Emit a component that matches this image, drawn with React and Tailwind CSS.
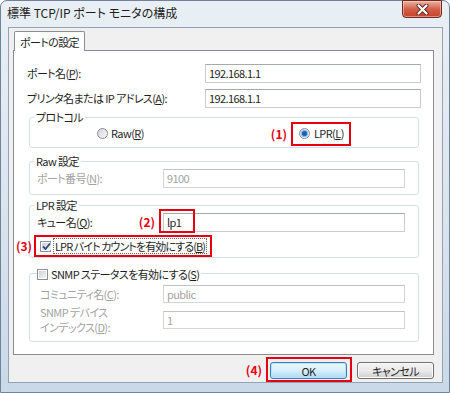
import React from 'react';

const FONT = 'font-["Noto_Sans_CJK_JP","Noto_Sans",sans-serif] [font-feature-settings:"palt"_1]';

function TextBox({ value, disabled = false, className = '' }) {
  return (
    <div
      className={`flex items-center pl-[3px] bg-white border whitespace-nowrap ${
        disabled
          ? 'border-[#d2d6dc] border-t-[#bfc3c9] text-[#a3a3a3]'
          : 'border-[#c9ccd2] border-t-[#a5a9b0] text-[#1e1e1e]'
      } ${className}`}
    >
      {value}
    </div>
  );
}

function Radio({ checked = false }) {
  return (
    <span className="w-[11px] h-[11px] shrink-0 rounded-full border border-[#8c8f94] bg-gradient-to-br from-[#d4d6d9] to-[#f7f7f7] flex items-center justify-center">
      {checked && (
        <span className="w-[5px] h-[5px] rounded-full bg-[#1c5fb0] shadow-[0_0_0_1px_#7eb4ea]" />
      )}
    </span>
  );
}

function Checkbox({ checked = false }) {
  return (
    <span className="w-[11px] h-[11px] shrink-0 border border-[#8c8f94] bg-white p-[1px] flex">
      <span className="flex-1 bg-gradient-to-br from-[#cfd1d4] to-[#f4f4f4] flex items-center justify-center">
        {checked && (
          <svg width="9" height="9" viewBox="0 0 9 9">
            <path d="M1 4.5 L3.5 7 L8 1.5" fill="none" stroke="#2b4686" strokeWidth="1.8" />
          </svg>
        )}
      </span>
    </span>
  );
}

function Group({ label, className = '', children }) {
  return (
    <div className={`relative ml-[2px] w-[390px] border border-[#d5dfe5] rounded-[3px] ${className}`}>
      <div className="absolute -top-[9px] left-[4px] bg-white px-[2px] leading-[16px] text-[#1e1e1e] whitespace-nowrap">
        {label}
      </div>
      {children}
    </div>
  );
}

function Mark({ children, className = '' }) {
  return (
    <span className={`text-[#e60012] font-bold text-[12px] leading-[16px] tracking-normal whitespace-nowrap ${className}`}>
      {children}
    </span>
  );
}

export default function App() {
  return (
    <div className="w-[450px] h-[393px] overflow-hidden bg-white">
      <div
        className={`${FONT} w-[450px] h-[393px] rounded-t-[7px] border border-[#6f849b] bg-gradient-to-b from-[#e9eff5] via-[#dbe5ef] to-[#c9d9e8] text-[11px] tracking-[-0.6px] text-[#1e1e1e] flex flex-col`}
      >
        {/* title bar */}
        <div className="h-[26px] flex items-start shrink-0">
          <div className="pl-[6px] pt-[4px] leading-[16px] text-[12px] tracking-normal text-[#1e1e1e] whitespace-nowrap">
            標準 TCP/IP ポート モニタの構成
          </div>
          <div className="ml-auto mr-[7px] -mt-[1px] w-[40px] h-[18px] rounded-b-[4px] border border-[#6c2c22] bg-gradient-to-b from-[#eab2a3] via-[#d4604a] to-[#c7402c] shadow-[inset_0_0_0_1px_rgba(255,220,210,0.5)] flex items-center justify-center">
            <svg width="13" height="11" viewBox="0 0 13 11">
              <path d="M2.5 1.5 L10.5 9.5 M10.5 1.5 L2.5 9.5" stroke="#5a2a22" strokeWidth="4" strokeLinecap="round" />
              <path d="M2.5 1.5 L10.5 9.5 M10.5 1.5 L2.5 9.5" stroke="#ffffff" strokeWidth="2.2" strokeLinecap="round" />
            </svg>
          </div>
        </div>

        {/* client area */}
        <div className="ml-[7px] w-[435px] h-[356px] shrink-0 border border-[#93a3b5] bg-[#f0f0f0] flex flex-col">
          {/* tab */}
          <div className="ml-[5px] mt-[3px] relative z-10 w-[71px] h-[20px] bg-white border border-b-0 border-[#898c95] rounded-t-[2px] flex items-center justify-center leading-[16px] whitespace-nowrap">
            ポートの設定
          </div>

          {/* tab panel */}
          <div className="ml-[4px] -mt-[1px] w-[421px] h-[305px] bg-white border border-[#898c95] pl-[13px] pt-[13px] flex flex-col">
            <div className="flex items-center h-[19px]">
              <span className="w-[178px] whitespace-nowrap">
                ポート名(<u>P</u>):
              </span>
              <TextBox value="192.168.1.1" className="w-[216px] h-[19px]" />
            </div>
            <div className="flex items-center h-[19px] mt-[6px]">
              <span className="w-[178px] whitespace-nowrap">
                プリンタ名または IP アドレス(<u>A</u>):
              </span>
              <TextBox value="192.168.1.1" className="w-[216px] h-[19px]" />
            </div>

            <Group label="プロトコル" className="mt-[9px] h-[31px]">
              <div className="h-full flex items-center justify-between pl-[67px] pr-[67px] pt-[2px]">
                <div className="flex items-center gap-[3px]">
                  <Radio />
                  <span className="whitespace-nowrap">
                    Raw(<u>R</u>)
                  </span>
                </div>
                <div className="flex items-center gap-[4px]">
                  <Mark>(1)</Mark>
                  <div className="w-[60px] h-[24px] border-2 border-[#e60012] pl-[6px] flex items-center gap-[4px]">
                    <Radio checked />
                    <span className="whitespace-nowrap">
                      LPR(<u>L</u>)
                    </span>
                  </div>
                </div>
              </div>
            </Group>

            <Group label="Raw 設定" className="mt-[13px] h-[34px] pt-[7px] pl-[7px]">
              <div className="flex items-center h-[19px]">
                <span className="w-[126px] text-[#a3a3a3] whitespace-nowrap">
                  ポート番号(<u>N</u>):
                </span>
                <TextBox value="9100" disabled className="w-[242px] h-[19px] border-[#c4c7cc] border-t-[#aeb1b6]" />
              </div>
            </Group>

            <Group label="LPR 設定" className="mt-[10px] h-[53px] pt-[7px]">
              <div className="flex items-center h-[19px] pl-[7px]">
                <span className="w-[126px] flex justify-between pr-[8px] whitespace-nowrap">
                  <span>
                    キュー名(<u>Q</u>):
                  </span>
                  <Mark>(2)</Mark>
                </span>
                <div className="relative">
                  <TextBox value="lp1" className="w-[242px] h-[19px]" />
                  <div className="absolute -left-[4px] -top-[4px] w-[36px] h-[24px] border-2 border-[#e60012]" />
                </div>
              </div>
              <div className="relative ml-[4px] mt-[3px] w-[178px] h-[22px] border-2 border-[#e60012] pl-[4px] flex items-center gap-[2px]">
                <Mark className="absolute -left-[20px] top-[1px]">(3)</Mark>
                <Checkbox checked />
                <span className="border border-dotted border-[#6a6a6a] px-[1px] leading-[14px] tracking-[-0.9px] whitespace-nowrap">
                  LPR バイト カウントを有効にする(<u>B</u>)
                </span>
              </div>
            </Group>

            <div className="relative ml-[2px] mt-[15px] w-[390px] h-[69px] border border-[#d5dfe5] rounded-[3px] pt-[11px] pl-[10px]">
              <div className="absolute -top-[8px] left-[7px] bg-white pr-[2px] flex items-center gap-[3px] leading-[16px] whitespace-nowrap">
                <Checkbox />
                <span>
                  SNMP ステータスを有効にする(<u>S</u>)
                </span>
              </div>
              <div className="flex items-center h-[18px] text-[#a3a3a3]">
                <span className="w-[123px] whitespace-nowrap">
                  コミュニティ名(<u>C</u>):
                </span>
                <TextBox value="public" disabled className="w-[242px] h-[18px]" />
              </div>
              <div className="flex items-center h-[18px] mt-[8px] text-[#a3a3a3]">
                <div className="w-[123px] flex flex-col leading-[15px] whitespace-nowrap">
                  <span>SNMP デバイス</span>
                  <span>
                    インデックス(<u>D</u>):
                  </span>
                </div>
                <TextBox value="1" disabled className="w-[242px] h-[18px]" />
              </div>
            </div>
          </div>

          {/* buttons */}
          <div className="flex justify-end items-start pr-[8px] mt-[2px]">
            <Mark className="mt-[5px] mr-[4px]">(4)</Mark>
            <div className="w-[86px] h-[25px] border-2 border-[#e60012] pl-[2px] pt-[3px]">
              <button className="w-[77px] h-[17px] rounded-[3px] border border-[#3c7fb1] bg-gradient-to-b from-[#eaf6fd] via-[#d9f0fc] to-[#a7d9f5] shadow-[inset_0_0_0_1px_#bfe3f8] flex items-center justify-center leading-[14px] text-[#1e1e1e]">
                OK
              </button>
            </div>
            <button className="ml-[5px] mt-[5px] w-[77px] h-[17px] rounded-[3px] border border-[#707070] bg-gradient-to-b from-[#f2f2f2] via-[#ebebeb] to-[#cfcfcf] shadow-[inset_0_0_0_1px_#fcfcfc] flex items-center justify-center leading-[14px] text-[#1e1e1e] whitespace-nowrap">
              キャンセル
            </button>
          </div>
        </div>
      </div>
    </div>
  );
}
